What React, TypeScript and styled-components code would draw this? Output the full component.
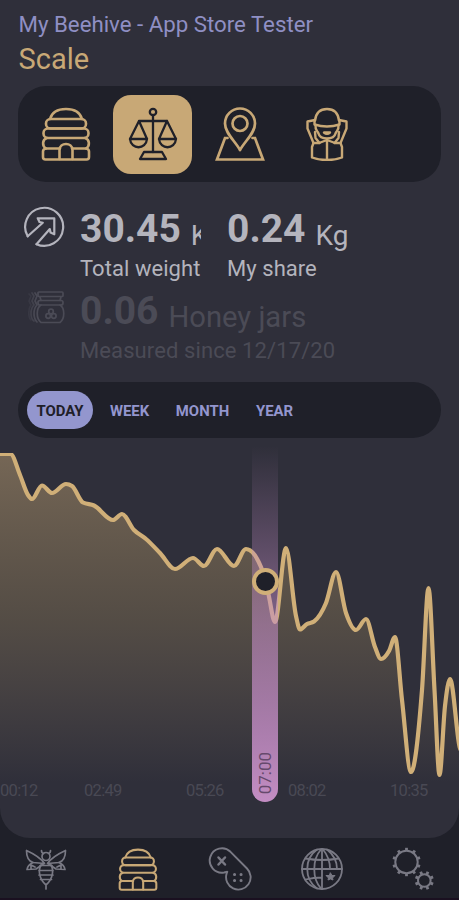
import React from "react";
import styled, { createGlobalStyle } from "styled-components";

const color = {
  panel: "#2f2f3a",
  dark: "#1f2029",
  gold: "#c8a876",
  line: "#d0af78",
  purple: "#9396ce",
  text: "#b4b4bd",
  faint: "#4b4b56",
  nav: "#797984",
};

const GlobalStyle = createGlobalStyle`
  * { box-sizing: border-box; }
  body { margin: 0; background: ${color.dark}; font-family: Roboto, "Liberation Sans", sans-serif; }
  button { font: inherit; border: 0; padding: 0; background: none; }
`;

const Screen = styled.div`
  width: 459px;
  height: 900px;
  overflow: hidden;
  display: flex;
  flex-direction: column;
  background: ${color.dark};
  border-bottom: 2px solid #1a1020;
`;

const Panel = styled.main`
  height: 838px;
  flex: none;
  display: flex;
  flex-direction: column;
  overflow: hidden;
  background: ${color.panel};
  border-radius: 0 0 30px 30px;
`;

const Header = styled.header`
  height: 86px;
  padding: 9px 0 0 18.5px;
`;

const Owner = styled.div`
  color: #8f8fc4;
  font-size: 22.25px;
  line-height: 30px;
`;

const Title = styled.h1`
  margin: 2px 0 0;
  color: ${color.gold};
  font-weight: 400;
  font-size: 29px;
  line-height: 36px;
`;

const Toolbar = styled.nav`
  height: 96px;
  margin: 0 18px;
  padding: 0 8px;
  display: flex;
  align-items: center;
  gap: 8px;
  border-radius: 28px;
  background: ${color.dark};
`;

const Tool = styled.button<{ $active?: boolean }>`
  width: 79px;
  height: 79px;
  display: grid;
  place-items: center;
  border-radius: 18px;
  color: ${(p) => (p.$active ? color.dark : color.gold)};
  background: ${(p) => (p.$active ? color.gold : "transparent")};
`;

const Stats = styled.section`
  height: 200px;
  padding: 22px 0 0 22px;
`;

const StatRow = styled.div<{ $faint?: boolean }>`
  display: grid;
  grid-template-columns: 58px auto auto;
  justify-content: start;
  height: 82px;
  color: ${(p) => (p.$faint ? color.faint : color.text)};
`;

const StatIcon = styled.div<{ $drop?: number }>`
  padding-top: ${(p) => p.$drop ?? 2}px;
  padding-left: 1px;
`;

const Stat = styled.div<{ $width?: number }>`
  width: ${(p) => (p.$width ? `${p.$width}px` : "auto")};
  margin-right: 26px;
  white-space: nowrap;
`;

const Figure = styled.div`
  display: flex;
  align-items: baseline;
  overflow: hidden;
  height: 51px;
  line-height: 51px;
`;

const Amount = styled.strong`
  font-size: 39px;
  font-weight: 700;
`;

const Unit = styled.span<{ $size: number }>`
  position: relative;
  top: 3px;
  margin-left: 10px;
  font-size: ${(p) => p.$size}px;
`;

const Caption = styled.div<{ $spaced?: boolean }>`
  font-size: 22px;
  line-height: 28px;
  letter-spacing: ${(p) => (p.$spaced ? "0.1px" : "0.05px")};
`;

const Ranges = styled.div`
  height: 56px;
  flex: none;
  margin: 0 18px;
  padding: 0 9px;
  display: flex;
  align-items: center;
  border-radius: 28px;
  background: ${color.dark};
`;

const Range = styled.button<{ $width: number; $active?: boolean }>`
  width: ${(p) => p.$width}px;
  height: 38px;
  padding-top: 1px;
  border-radius: 19px;
  text-align: center;
  font-size: 14.9px;
  font-weight: 700;
  color: ${(p) => (p.$active ? color.dark : color.purple)};
  background: ${(p) => (p.$active ? color.purple : "transparent")};
`;

const Chart = styled.section`
  position: relative;
  height: 400px;
  flex: none;
  display: flex;
  flex-direction: column;
  justify-content: flex-end;
`;

const Plot = styled.svg`
  position: absolute;
  inset: 0;
`;

const Axis = styled.div`
  position: relative;
  display: grid;
  grid-template-columns: 84px repeat(4, 102px);
  height: 58px;
  color: #494954;
  font-size: 16.5px;
  line-height: 22px;
  letter-spacing: -0.7px;
  white-space: nowrap;
`;

const Marker = styled.div`
  position: absolute;
  left: 252px;
  top: 8px;
  width: 26px;
  height: 356px;
  padding-bottom: 8px;
  display: flex;
  align-items: flex-end;
  justify-content: center;
  border-radius: 0 0 13px 13px;
  background: linear-gradient(
    rgba(198, 142, 200, 0),
    rgba(198, 142, 200, 0.28) 26%,
    rgba(198, 142, 200, 0.55) 50%,
    rgba(198, 142, 200, 0.8) 80%,
    rgba(203, 146, 202, 0.95)
  );
`;

const MarkerTime = styled.span`
  writing-mode: vertical-rl;
  transform: rotate(180deg);
  color: #66496c;
  font-size: 17px;
  line-height: 20px;
`;

const Handle = styled.div`
  position: absolute;
  left: 252px;
  top: 130px;
  width: 27px;
  height: 27px;
  border: 4px solid ${color.line};
  border-radius: 50%;
  background: ${color.dark};
`;

const BottomNav = styled.nav`
  flex: 1;
  display: grid;
  grid-template-columns: repeat(5, 92px);
  align-items: center;
  padding-top: 2px;
`;

const NavItem = styled.button<{ $active?: boolean }>`
  display: grid;
  place-items: center;
  color: ${(p) => (p.$active ? color.gold : color.nav)};
`;

const Icon = styled.svg`
  display: block;
  fill: none;
  stroke: currentColor;
  stroke-linejoin: round;
  stroke-linecap: round;
`;

const HiveIcon = ({ w, h, stroke }: { w: number; h: number; stroke: number }) => (
  <Icon width={w} height={h} viewBox="0 0 50 54" strokeWidth={stroke}>
    <path d="M9 12C11 5 17 2 25 2s14 3 16 10" />
    <rect x="5" y="12" width="40" height="9.5" rx="4.500" />
    <rect x="2.500" y="21.5" width="45" height="9.500" rx="4.500" />
    <path d="M6 31C1 32.500 1 39 5 41.500h14M44 31c5 1.500 5 8 1 10.500h-14" />
    <path d="M5 41.500q-3 .5-3 3V50q0 2.500 2.500 2.500h41Q48 52.500 48 50v-5.500q0-2.500-3-3" />
    <path d="M18.500 52V43c0-8 13-8 13 0v9" />
  </Icon>
);

const ScaleIcon = () => (
  <Icon width="50" height="54" viewBox="0 0 50 54" strokeWidth="2.3">
    <circle cx="25" cy="5" r="3.2" />
    <path d="M25 8v37M11 14h28M11 14 2 32h17L11 14zM39 14l-8 18h17L39 14z" />
    <path d="M2 32c1 11 16 11 17 0M31 32c1 11 16 11 17 0" />
    <path d="M16 45h18l4 7H12z" />
  </Icon>
);

const PlaceIcon = () => (
  <Icon width="50" height="54" viewBox="0 0 50 54" strokeWidth="2.7">
    <path d="M25 43C20 34 10 26 10 16.500a15 15 0 0 1 30 0C40 26 30 34 25 43z" />
    <circle cx="25" cy="16.500" r="7.500" />
    <path d="M12.500 31H10L2 52.500h46L40 31h-2.500" strokeLinejoin="miter" />
  </Icon>
);

const KeeperIcon = () => (
  <Icon width="42" height="54" viewBox="0 0 42 54" strokeWidth="2.4">
    <path d="M9 13.500C10 5 15 2 21 2s11 3 12 11.500" />
    <path d="M9 13 1.500 14.500v7L7.500 36M33 13l7.500 1.500v7L34.500 36" />
    <path d="M8.500 13v4.500q12.500 4 25 0V13" />
    <path d="M9.500 18c-.5 6 2 5.500 3 8.500 1 4 4 5 8.500 5s7.500-1 8.500-5c1-3 3.500-2.500 3-8.500" />
    <path d="M18 25.500h6q-3 2.500-6 0z" />
    <path d="M9 25l.5 6 4 5M33 25l-.5 6-4 5" />
    <path d="M7.500 36 6 40v10.500c5 2 9 2.500 15 2.500s10-.5 15-2.500V40l-1.500-4M7.500 36h5.500l8-3 8 3h5.500M21 33v20" />
  </Icon>
);

const ArrowIcon = () => (
  <Icon width="44" height="44" viewBox="0 0 44 44" strokeWidth="2.2">
    <path d="M4.700 30.300A19 19 0 1 1 13.500 38.200" />
    <path d="M4.700 30.300 19.800 16.800 16.500 16l-1.800-3.700h16.600v16L27.500 26.500l-.7-3.500L13.500 38.200" />
  </Icon>
);

const JarsIcon = () => (
  <Icon width="44" height="36" viewBox="0 0 44 36" strokeWidth="1.7">
    <rect x="15" y="2" width="25" height="4.500" rx="1" />
    <path d="M17 7l1 3.500M38 7l-1 3.500" />
    <rect x="15" y="10.500" width="25" height="4.500" rx="2" />
    <path d="M18 15c-5 3-5 14 0 17.500h19c5-3.500 5-14.500 0-17.500" />
    <circle cx="28" cy="21.500" r="2.300" />
    <circle cx="25.200" cy="26" r="2.300" />
    <circle cx="30.800" cy="26" r="2.300" />
    <path d="M12 3l2 3-2 5 2 4c-4 4-4 13 0 17" opacity=".9" />
    <path d="M9 3l2 3-2 5 2 4c-4 4-4 13 0 16" opacity=".65" />
    <path d="M6 4l2 2-2 5 2 4c-3 4-3 12 0 15" opacity=".35" />
  </Icon>
);

const BeeIcon = () => (
  <Icon width="44" height="44" viewBox="0 0 44 44" strokeWidth="1.7">
    <path d="M17.500 3.500q0 2.500 2 3M26.500 3.500q0 2.500-2 3" />
    <circle cx="22" cy="9.500" r="4" />
    <path d="M20.500 16.500C16 10 8 6 2.500 3.500 2.500 10 4 14 9 15.500zM23.500 16.500C28 10 36 6 41.500 3.500c0 6.500-1.500 10.500-6.500 12z" />
    <path d="M9 15.500C6 17 3.500 19 3 22.500l9-.5 8-5.500M35 15.500c3 1.500 5.500 3.500 6 7l-9-.5-8-5.500M7 22v-4l4 2M37 22v-4l-4 2" />
    <path d="M17 18c-3 5-2 14 5 20 7-6 8-15 5-20M16 18.500h12M15 23.500h14M15 28h14M16.500 32.500h11M22 38v4" />
  </Icon>
);

const GameIcon = () => (
  <Icon width="44" height="44" viewBox="0 0 44 44" strokeWidth="1.9">
    <path d="M22.500 4.800 39 21.500A12.300 12.300 0 1 1 18.500 27l.8-2.200-3.200.7A12.200 12.200 0 1 1 22.500 4.800Z" />
    <path d="m10.500 10.500 6.500 7M17 10.500l-6.500 7" strokeWidth="2.500" />
    <path d="M26.500 27.500h.1M33 27.500h.1M26.500 33.500h.1M33 33.500h.1" strokeWidth="3" />
  </Icon>
);

const GlobeIcon = () => (
  <Icon width="44" height="44" viewBox="0 0 44 44" strokeWidth="1.8">
    <circle cx="22" cy="22" r="20" />
    <path d="M22 2v40M2 22h40M5.500 11.500q16.500 3 33 0M5.500 32.500q8-2 16.500-2" />
    <path d="M17 2.500C4 12 4 32 17 41.500M21 2.500c-9 10-9 29 0 39M27 2.500C34 8 37 14 37 22M23 2.500c5 6 7 12 7 19.500" />
    <path d="m30.500 26 1.500 2.500h3L32.500 31l.5 2-2.500-1-2.500 1 .5-2-2.500-2.500h3z" fill="currentColor" strokeWidth="1" />
  </Icon>
);

const Gear = ({ x, y, r, teeth, len }: { x: number; y: number; r: number; teeth: number; len: number }) => (
  <g>
    <circle cx={x} cy={y} r={r} />
    {Array.from({ length: teeth }, (_, i) => {
      const a = ((i + 0.5) / teeth) * Math.PI * 2;
      return (
        <path
          key={i}
          strokeWidth="2.800"
          strokeLinecap="butt"
          d={`M${x + Math.cos(a) * r} ${y + Math.sin(a) * r}L${x + Math.cos(a) * (r + len)} ${y + Math.sin(a) * (r + len)}`}
        />
      );
    })}
  </g>
);

const GearsIcon = () => (
  <Icon width="44" height="44" viewBox="0 0 44 44" strokeWidth="2">
    <Gear x={14.500} y={15} r={11.200} teeth={10} len={3} />
    <Gear x={32.300} y={33.500} r={6.300} teeth={8} len={3.200} />
  </Icon>
);

type Point = [number, number];

const weights: Point[] = [
  [-6, 16], [10.500, 16], [20, 37], [28, 57], [32, 61], [42, 47.5], [52, 55], [66, 46], [72, 48], [83, 64.500],
  [94, 67.500], [113, 82], [122, 76], [134, 92], [146, 101], [160, 115], [175, 131],
  [193, 120], [204, 128], [217, 111], [234, 128], [246, 111], [261, 129], [268, 154],
  [275, 184], [286, 110], [296, 178], [300, 191.500], [307, 186], [314, 183.500], [326, 165],
  [336, 134], [346, 175], [356, 192], [366, 181], [375, 209], [381, 221], [389, 213],
  [395, 199], [402, 262], [411, 334], [422, 252], [428.500, 150], [434.500, 252],
  [439.500, 337], [445, 268], [450, 241], [461, 312],
];

// Monotone cubic interpolation keeps every local extreme flat.
function smoothPath(points: Point[]): string {
  const slope = (i: number) => (points[i + 1][1] - points[i][1]) / (points[i + 1][0] - points[i][0]);
  const tangent = points.map((_, i) => {
    if (i === 0 || i === points.length - 1) return 0;
    const a = slope(i - 1);
    const b = slope(i);
    const ha = points[i][0] - points[i - 1][0];
    const hb = points[i + 1][0] - points[i][0];
    const mean = (a * hb + b * ha) / (ha + hb);
    return (Math.sign(a) + Math.sign(b)) * Math.min(Math.abs(a), Math.abs(b), 0.5 * Math.abs(mean));
  });
  return points.slice(1).reduce((d, [x, y], i) => {
    const [px, py] = points[i];
    const t = (x - px) / 3;
    return `${d}C${px + t} ${py + tangent[i] * t} ${x - t} ${y - tangent[i + 1] * t} ${x} ${y}`;
  }, `M${points[0].join(" ")}`);
}

const curve = smoothPath(weights);
const times = ["00:12", "02:49", "05:26", "08:02", "10:35"];

export default function App() {
  return (
    <Screen>
      <GlobalStyle />
      <Panel>
        <Header>
          <Owner>My Beehive - App Store Tester</Owner>
          <Title>Scale</Title>
        </Header>
        <Toolbar>
          <Tool aria-label="Hive"><HiveIcon w={50} h={54} stroke={2.6} /></Tool>
          <Tool aria-label="Scale" $active><ScaleIcon /></Tool>
          <Tool aria-label="Location"><PlaceIcon /></Tool>
          <Tool aria-label="Beekeeper"><KeeperIcon /></Tool>
        </Toolbar>
        <Stats>
          <StatRow>
            <StatIcon><ArrowIcon /></StatIcon>
            <Stat $width={121}>
              <Figure><Amount>30.45</Amount><Unit $size={28}>Kg</Unit></Figure>
              <Caption>Total weight</Caption>
            </Stat>
            <Stat>
              <Figure><Amount>0.24</Amount><Unit $size={28}>Kg</Unit></Figure>
              <Caption>My share</Caption>
            </Stat>
          </StatRow>
          <StatRow $faint>
            <StatIcon $drop={4}><JarsIcon /></StatIcon>
            <Stat>
              <Figure><Amount>0.06</Amount><Unit $size={29.200}>Honey jars</Unit></Figure>
              <Caption $spaced>Measured since 12/17/20</Caption>
            </Stat>
          </StatRow>
        </Stats>
        <Ranges>
          <Range $width={66} $active>TODAY</Range>
          <Range $width={73}>WEEK</Range>
          <Range $width={73}>MONTH</Range>
          <Range $width={71}>YEAR</Range>
        </Ranges>
        <Chart>
          <Plot width="459" height="400" viewBox="0 0 459 400">
            <defs>
              <linearGradient id="fill" gradientUnits="userSpaceOnUse" x1="0" y1="16" x2="0" y2="345">
                <stop offset="0" stopColor={color.gold} stopOpacity=".46" />
                <stop offset=".5" stopColor="#b39862" stopOpacity=".28" />
                <stop offset="1" stopColor={color.gold} stopOpacity="0" />
              </linearGradient>
              <clipPath id="plotArea">
                <rect x="0" y="15" width="459" height="385" />
              </clipPath>
            </defs>
            <g clipPath="url(#plotArea)">
              <path d={`${curve}V400H-6Z`} fill="url(#fill)" />
              <path d={curve} fill="none" stroke={color.line} strokeWidth="4.200" strokeLinejoin="round" />
            </g>
          </Plot>
          <Axis>
            {times.map((t) => <span key={t}>{t}</span>)}
          </Axis>
          <Marker><MarkerTime>07:00</MarkerTime></Marker>
          <Handle />
        </Chart>
      </Panel>
      <BottomNav>
        <NavItem aria-label="Bees"><BeeIcon /></NavItem>
        <NavItem aria-label="Hive" $active><HiveIcon w={40} h={43} stroke={2.6} /></NavItem>
        <NavItem aria-label="Games"><GameIcon /></NavItem>
        <NavItem aria-label="World"><GlobeIcon /></NavItem>
        <NavItem aria-label="Settings"><GearsIcon /></NavItem>
      </BottomNav>
    </Screen>
  );
}
